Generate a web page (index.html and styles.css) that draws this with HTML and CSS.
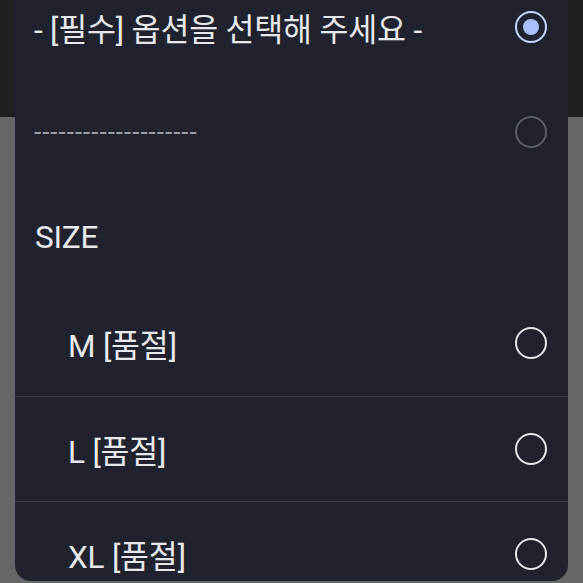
FILE: index.html
```html
<!DOCTYPE html>
<html lang="ko">
<head>
<meta charset="utf-8">
<link rel="stylesheet" href="styles.css">
</head>
<body>
<div class="sheet">
  <ul class="list">
    <li class="row">
      <span class="label">- [필수] 옵션을 선택해 주세요 -</span>
      <span class="radio checked"><span class="dot"></span></span>
    </li>
    <li class="row">
      <span class="label dashes">--------------------</span>
      <span class="radio disabled"></span>
    </li>
    <li class="row group">
      <span class="label">SIZE</span>
    </li>
    <li class="row sub">
      <span class="label">M [품절]</span>
      <span class="radio"></span>
    </li>
    <li class="row sub divided">
      <span class="label">L [품절]</span>
      <span class="radio"></span>
    </li>
    <li class="row sub divided">
      <span class="label">XL [품절]</span>
      <span class="radio"></span>
    </li>
  </ul>
</div>
</body>
</html>
```

FILE: styles.css
```css
* { box-sizing: border-box; }
html, body { margin: 0; padding: 0; }
body {
  width: 583px;
  height: 583px;
  overflow: hidden;
  padding: 0 15px 0 15px;
  background: linear-gradient(#1f1f1f 0 117px, #666666 117px);
  font-family: Roboto, "Noto Sans CJK KR", sans-serif;
}
.sheet {
  margin-top: -26px;
  height: 607px;
  background: #20232d;
  border-radius: 0 0 16px 16px;
  overflow: hidden;
}
.list {
  list-style: none;
  margin: 0;
  padding: 0;
}
.row {
  height: 105.4px;
  display: flex;
  align-items: center;
  justify-content: space-between;
  padding: 0 21px 0 19px;
}
.row.group { padding-left: 20px; }
.row.sub { padding-left: 53px; }
.row.divided { border-top: 1px solid #3a3d46; }
.label {
  color: #e8e8ec;
  font-size: 31.5px;
  letter-spacing: -0.2px;
}
.dashes {
  font-size: 26px;
  color: #9a9ca4;
  letter-spacing: 1px;
}
.radio {
  width: 32px;
  height: 32px;
  border-radius: 50%;
  border: 2.5px solid #e6e6ea;
  display: flex;
  align-items: center;
  justify-content: center;
}
.radio.disabled { border-color: #5b5e66; }
.radio.checked { border-color: #c9d7ff; }
.radio .dot {
  width: 16px;
  height: 16px;
  border-radius: 50%;
  background: #a9c2ff;
}
```
